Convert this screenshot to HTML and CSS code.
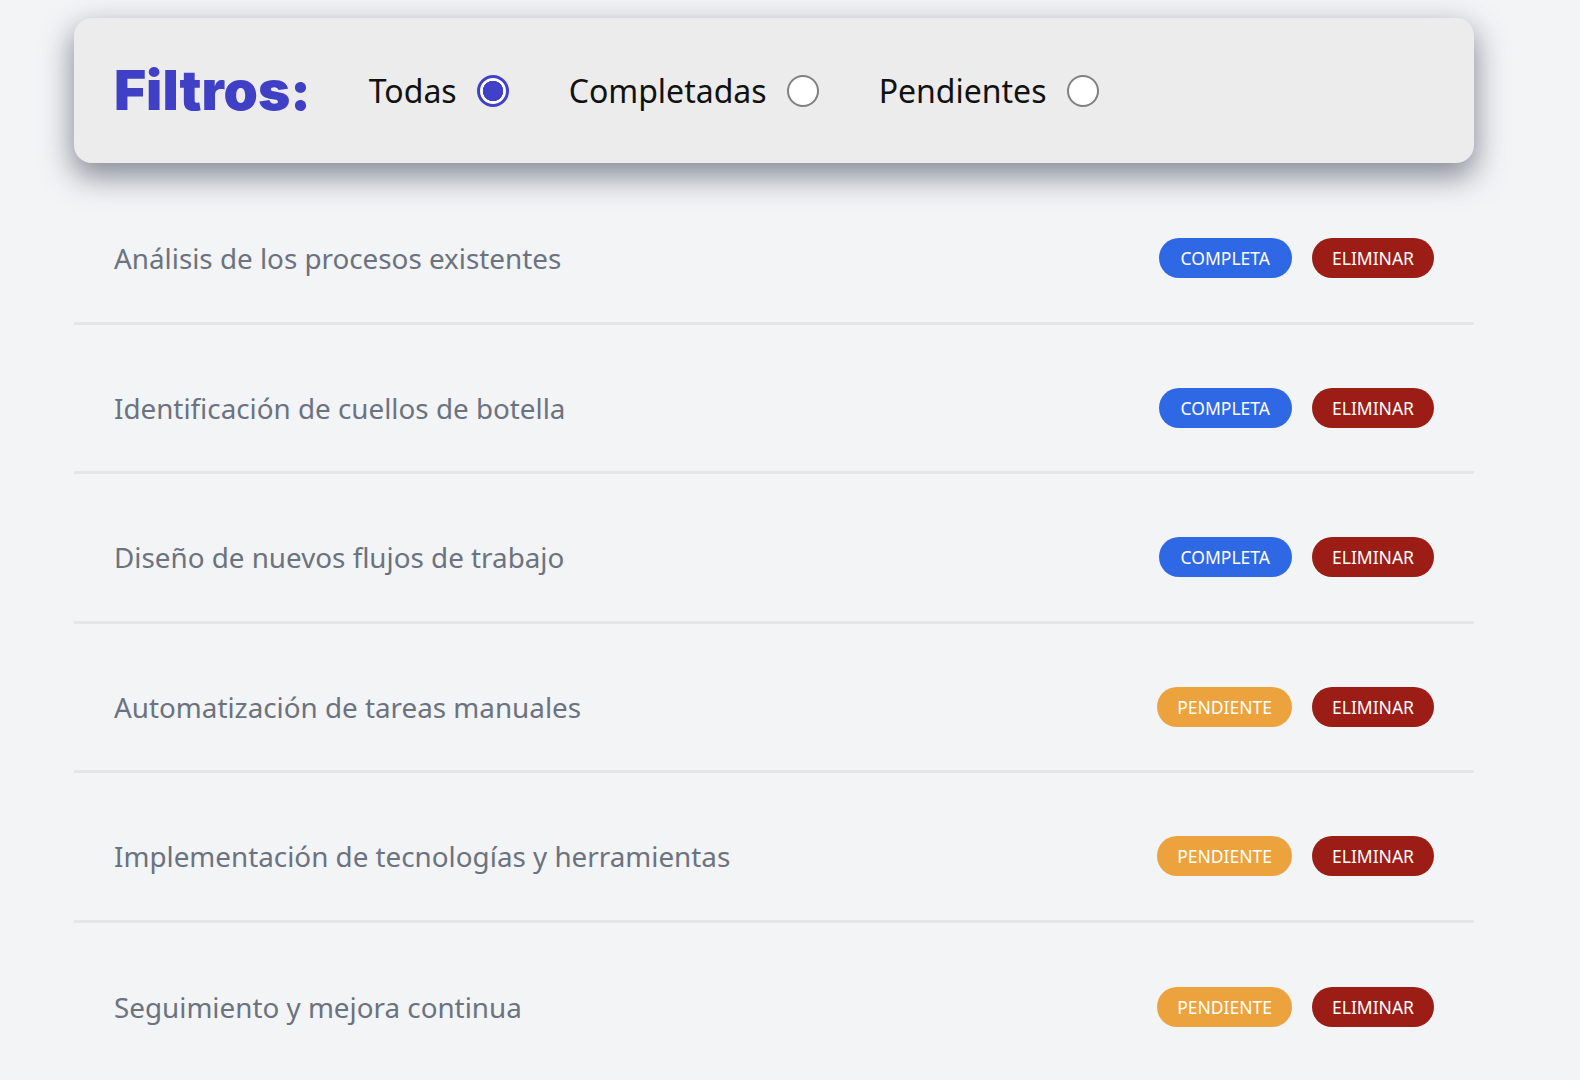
FILE: index.html
```html
<!DOCTYPE html>
<html lang="es">
<head>
<meta charset="utf-8">
<title>Tareas</title>
<link rel="stylesheet" href="styles.css">
</head>
<body>
<main class="page">
  <section class="filters">
    <h1 class="filters-title">Filtros:</h1>
    <label class="filter">
      <span class="filter-label">Todas</span>
      <input class="radio" type="radio" name="filtro" checked>
    </label>
    <label class="filter">
      <span class="filter-label">Completadas</span>
      <input class="radio" type="radio" name="filtro">
    </label>
    <label class="filter">
      <span class="filter-label">Pendientes</span>
      <input class="radio" type="radio" name="filtro">
    </label>
  </section>

  <ul class="tasks">
    <li class="task">
      <span class="task-name">Análisis de los procesos existentes</span>
      <div class="actions"><button class="pill pill-done">COMPLETA</button><button class="pill pill-delete">ELIMINAR</button></div>
    </li>
    <li class="task">
      <span class="task-name">Identificación de cuellos de botella</span>
      <div class="actions"><button class="pill pill-done">COMPLETA</button><button class="pill pill-delete">ELIMINAR</button></div>
    </li>
    <li class="task">
      <span class="task-name">Diseño de nuevos flujos de trabajo</span>
      <div class="actions"><button class="pill pill-done">COMPLETA</button><button class="pill pill-delete">ELIMINAR</button></div>
    </li>
    <li class="task">
      <span class="task-name">Automatización de tareas manuales</span>
      <div class="actions"><button class="pill pill-pending">PENDIENTE</button><button class="pill pill-delete">ELIMINAR</button></div>
    </li>
    <li class="task">
      <span class="task-name">Implementación de tecnologías y herramientas</span>
      <div class="actions"><button class="pill pill-pending">PENDIENTE</button><button class="pill pill-delete">ELIMINAR</button></div>
    </li>
    <li class="task">
      <span class="task-name">Seguimiento y mejora continua</span>
      <div class="actions"><button class="pill pill-pending">PENDIENTE</button><button class="pill pill-delete">ELIMINAR</button></div>
    </li>
  </ul>
</main>
</body>
</html>
```

FILE: styles.css
```css
* { box-sizing: border-box; }

html, body {
  margin: 0;
  padding: 0;
  background: #f3f4f6;
}

body {
  font-family: "Noto Sans", "Open Sans", sans-serif;
}

.page {
  width: 1400px;
  margin-left: 74px;
  padding-top: 18px;
}

.filters {
  display: flex;
  align-items: center;
  height: 145px;
  padding: 0 40px;
  background: #ececec;
  border-radius: 18px;
  box-shadow: 0 12px 30px 2px rgba(70, 78, 95, 0.62);
}

.filters-title {
  margin: 0 58px 0 0;
  font-family: Inter, sans-serif;
  font-weight: 900;
  font-size: 55px;
  letter-spacing: 0;
  color: #4040c6;
  line-height: 1;
}

.filter {
  display: flex;
  align-items: center;
  gap: 20px;
  margin-right: 60px;
  cursor: pointer;
}

.filter-label {
  font-size: 32px;
  color: #111;
}

.radio {
  appearance: none;
  -webkit-appearance: none;
  margin: 0;
  width: 32px;
  height: 32px;
  border-radius: 50%;
  border: 2px solid #808080;
  background: #fff;
}

.radio:checked {
  border: 3px solid #4040c8;
  background: radial-gradient(circle, #4040c8 0 10px, #fff 10.5px);
}

.tasks {
  list-style: none;
  margin: 12px 0 0;
  padding: 0;
}

.task {
  display: flex;
  align-items: center;
  justify-content: space-between;
  height: 149.5px;
  padding: 20px 40px 0;
  border-bottom: 3px solid #e5e6e8;
}

.task:last-child {
  border-bottom: none;
}

.task-name {
  font-size: 27.8px;
  color: #6b7280;
}

.actions {
  display: flex;
  gap: 20px;
}

.pill {
  height: 40px;
  padding: 0 20px;
  border: none;
  border-radius: 20px;
  font-family: "Noto Sans", "Open Sans", sans-serif;
  font-size: 17.5px;
  color: #fff;
  line-height: 40px;
}

.pill-done { background: #2f68e5; padding: 0 22px; }
.pill-pending { background: #eca33e; }
.pill-delete { background: #9b1d15; }
```
